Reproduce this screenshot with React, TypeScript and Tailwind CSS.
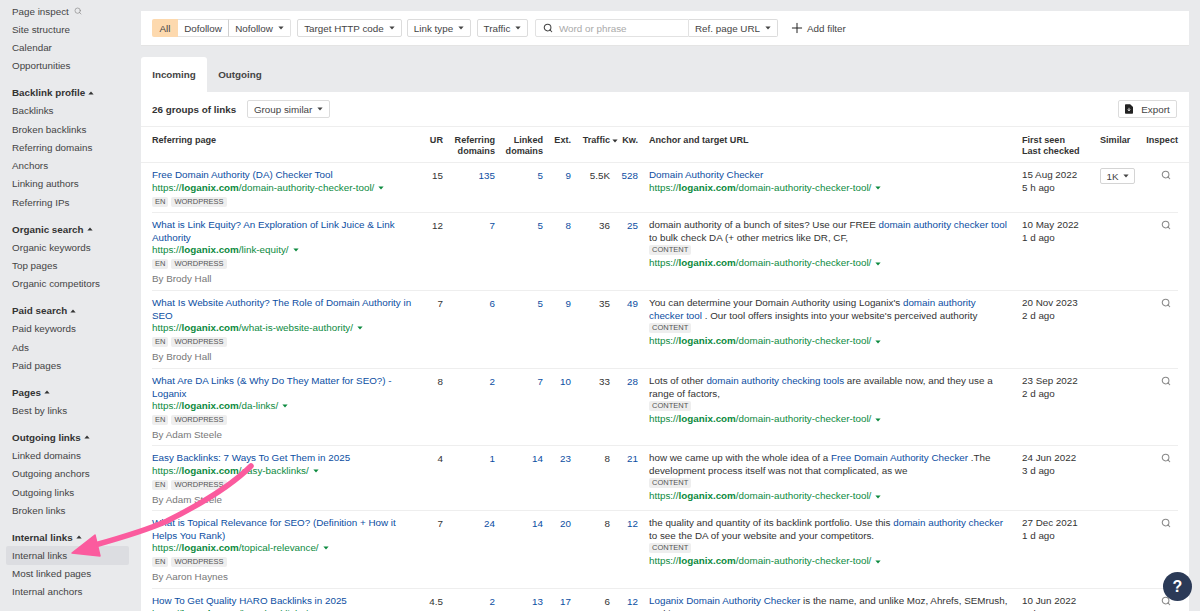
import React from "react";
import { Search, Plus } from "lucide-react";

const Caret = ({ up = false, className = "" }: { up?: boolean; className?: string }) => (
  <svg viewBox="0 0 8 5" className={"inline-block w-[6px] h-[4px] fill-current " + className}>
    <path d={up ? "M4 0.5 L7.5 4.5 L0.5 4.5 Z" : "M0.5 0.5 L7.5 0.5 L4 4.5 Z"} />
  </svg>
);

const groups: { title?: string; items: string[] }[] = [
  { items: ["Page inspect", "Site structure", "Calendar", "Opportunities"] },
  { title: "Backlink profile", items: ["Backlinks", "Broken backlinks", "Referring domains", "Anchors", "Linking authors", "Referring IPs"] },
  { title: "Organic search", items: ["Organic keywords", "Top pages", "Organic competitors"] },
  { title: "Paid search", items: ["Paid keywords", "Ads", "Paid pages"] },
  { title: "Pages", items: ["Best by links"] },
  { title: "Outgoing links", items: ["Linked domains", "Outgoing anchors", "Outgoing links", "Broken links"] },
  { title: "Internal links", items: ["Internal links", "Most linked pages", "Internal anchors"] },
];

type A = { t: string; l?: boolean };
type Row = {
  h: string;
  title: string;
  slug: string;
  by?: string;
  ur: string; rd: string; ld: string; ext: string; tr: string; kw: string;
  anchor: A[];
  content: boolean;
  first: string; last: string;
  similar?: boolean;
};

const rows: Row[] = [
  { h: "h-[49px]", title: "Free Domain Authority (DA) Checker Tool", slug: "domain-authority-checker-tool/", ur: "15", rd: "135", ld: "5", ext: "9", tr: "5.5K", kw: "528", anchor: [{ t: "Domain Authority Checker", l: true }], content: false, first: "15 Aug 2022", last: "5 h ago", similar: true },
  { h: "h-[78px]", title: "What is Link Equity? An Exploration of Link Juice & Link Authority", slug: "link-equity/", by: "By Brody Hall", ur: "12", rd: "7", ld: "5", ext: "8", tr: "36", kw: "25", anchor: [{ t: "domain authority of a bunch of sites? Use our FREE " }, { t: "domain authority checker tool", l: true }, { t: " to bulk check DA (+ other metrics like DR, CF," }], content: true, first: "10 May 2022", last: "1 d ago" },
  { h: "h-[78px]", title: "What Is Website Authority? The Role of Domain Authority in SEO", slug: "what-is-website-authority/", by: "By Brody Hall", ur: "7", rd: "6", ld: "5", ext: "9", tr: "35", kw: "49", anchor: [{ t: "You can determine your Domain Authority using Loganix's " }, { t: "domain authority checker tool", l: true }, { t: " . Our tool offers insights into your website's perceived authority" }], content: true, first: "20 Nov 2023", last: "2 d ago" },
  { h: "h-[77px]", title: "What Are DA Links (& Why Do They Matter for SEO?) - Loganix", slug: "da-links/", by: "By Adam Steele", ur: "8", rd: "2", ld: "7", ext: "10", tr: "33", kw: "28", anchor: [{ t: "Lots of other " }, { t: "domain authority checking tools", l: true }, { t: " are available now, and they use a range of factors," }], content: true, first: "23 Sep 2022", last: "2 d ago" },
  { h: "h-[65px]", title: "Easy Backlinks: 7 Ways To Get Them in 2025", slug: "easy-backlinks/", by: "By Adam Steele", ur: "4", rd: "1", ld: "14", ext: "23", tr: "8", kw: "21", anchor: [{ t: "how we came up with the whole idea of a " }, { t: "Free Domain Authority Checker", l: true }, { t: " .The development process itself was not that complicated, as we" }], content: true, first: "24 Jun 2022", last: "3 d ago" },
  { h: "h-[78px]", title: "What is Topical Relevance for SEO? (Definition + How it Helps You Rank)", slug: "topical-relevance/", by: "By Aaron Haynes", ur: "7", rd: "24", ld: "14", ext: "20", tr: "8", kw: "12", anchor: [{ t: "the quality and quantity of its backlink portfolio. Use this " }, { t: "domain authority checker", l: true }, { t: " to see the DA of your website and your competitors." }], content: true, first: "27 Dec 2021", last: "1 d ago" },
  { h: "h-[77px]", title: "How To Get Quality HARO Backlinks in 2025", slug: "haro-backlinks/", ur: "4.5", rd: "2", ld: "13", ext: "17", tr: "6", kw: "12", anchor: [{ t: "Loganix Domain Authority Checker", l: true }, { t: " is the name, and unlike Moz, Ahrefs, SEMrush, and it" }], content: false, first: "10 Jun 2022", last: "1 d ago" },
];

const Url = ({ slug }: { slug: string }) => (
  <div className="text-[#0c8a3e] leading-[12.5px] whitespace-nowrap">
    https://<b className="font-bold">loganix.com</b>/{slug}
    <Caret className="ml-[4px] align-middle" />
  </div>
);

const Tag = ({ t }: { t: string }) => (
  <span className="inline-block h-[10px] leading-[10px] px-[3px] mr-[3px] rounded-[2px] bg-[#eeeeee] text-[#555] text-[7.5px] align-top">{t}</span>
);

const Btn = ({ children, className = "" }: { children: React.ReactNode; className?: string }) => (
  <div className={"h-[18px] flex items-center justify-center gap-[5px] bg-white border border-[#dcdcdc] rounded-[2px] text-[#444] shrink-0 " + className}>{children}</div>
);

const cols = "grid grid-cols-[268px_23px_52px_48px_28px_39px_28px_384px_78px_45px_33px]";
const num = "text-right";

export default function App() {
  return (
    <div className="relative w-[1200px] h-[611px] overflow-hidden bg-[#e9eaec] text-[#333] text-[9.84px] leading-[13px] font-[Arial]">
      {/* sidebar */}
      <div className="absolute left-0 top-[2px] w-[141px] pr-[12px]">
        {groups.map((g, i) => (
          <div key={i} className={i ? "mt-[8.6px]" : ""}>
            {g.title && (
              <div className="h-[18.25px] pl-[12px] flex items-center gap-[3px] font-bold text-[#333]">
                {g.title}
                <Caret up className="w-[5px] h-[4px]" />
              </div>
            )}
            {g.items.map((it, j) => {
              const active = i === 6 && j === 0;
              return (
                <div key={it} className={"h-[18.25px] pl-[6px] ml-[6px] flex items-center gap-[5px] rounded-[2px] text-[#444] " + (active ? "bg-[#dcdde1]" : "")}>
                  {it}
                  {it === "Page inspect" && <Search size={8} className="text-[#888]" />}
                </div>
              );
            })}
          </div>
        ))}
      </div>

      {/* filter bar */}
      <div className="absolute left-[141px] top-[11px] w-[1048px] h-[35px] bg-white border-b border-[#e4e4e4] flex items-center pl-[11px]">
        <div className="flex h-[18px]">
          <div className="w-[26px] flex items-center justify-center bg-[#fdd9ae] text-[#444] rounded-l-[2px]">All</div>
          <div className="w-[51px] flex items-center justify-center border-y border-r border-[#cfcfcf] border-y-[#e2e2e2] text-[#444]">Dofollow</div>
          <div className="w-[62px] flex items-center justify-center gap-[5px] border-y border-r border-[#e2e2e2] rounded-r-[2px] text-[#444]">Nofollow <Caret /></div>
        </div>
        <Btn className="w-[105px] ml-[6px]">Target HTTP code <Caret /></Btn>
        <Btn className="w-[64px] ml-[5px]">Link type <Caret /></Btn>
        <Btn className="w-[51px] ml-[6px]">Traffic <Caret /></Btn>
        <div className="ml-[7px] w-[154px] h-[18px] flex items-center border border-[#e2e2e2] rounded-l-[2px] pl-[7px] gap-[6px] text-[#aaa]">
          <Search size={10} strokeWidth={2.5} className="text-[#444]" />
          Word or phrase
        </div>
        <Btn className="w-[89px] !border-l-0 rounded-l-none">Ref. page URL <Caret /></Btn>
        <div className="ml-[11px] flex items-center gap-[2px] text-[#444]">
          <Plus size={16} strokeWidth={1.5} className="text-[#222]" />
          Add filter
        </div>
      </div>

      {/* tabs */}
      <div className="absolute left-[141px] top-[57px] flex h-[35px]">
        <div className="w-[66px] bg-white rounded-t-[3px] flex items-center justify-center font-bold text-[#444]">Incoming</div>
        <div className="w-[66px] flex items-center justify-center font-bold text-[#444]">Outgoing</div>
      </div>

      {/* table panel */}
      <div className="absolute left-[141px] top-[92px] w-[1048px] h-[519px] bg-white overflow-hidden">
        <div className="h-[35px] flex items-center pl-[11px] pr-[12px] border-b border-[#eeeeee]">
          <b className="font-bold text-[#333]">26 groups of links</b>
          <Btn className="ml-[11px] w-[83px]">Group similar <Caret /></Btn>
          <Btn className="ml-auto w-[59px]">
            <svg viewBox="0 0 10 12" className="w-[8px] h-[10px] mr-[3px]">
              <path d="M0 1 Q0 0 1 0 H6.5 L10 3.5 V11 Q10 12 9 12 H1 Q0 12 0 11 Z" fill="#222" />
              <path d="M5 4.5 V7.5 M3.5 6.5 L5 8.5 L6.5 6.5" stroke="#fff" strokeWidth="1" fill="none" />
            </svg>
            Export
          </Btn>
        </div>
        <div className={cols + " h-[35px] mx-[11px] pt-[8px] font-bold text-[#333] text-[9.1px] leading-[11px]"}>
          <div>Referring page</div>
          <div className={num}>UR</div>
          <div className={num}>Referring<br />domains</div>
          <div className={num}>Linked<br />domains</div>
          <div className={num}>Ext.</div>
          <div className={num + " relative whitespace-nowrap"}>Traffic<Caret className="absolute right-[-8px] top-[4px]" /></div>
          <div className={num}>Kw.</div>
          <div className="pl-[11px]">Anchor and target URL</div>
          <div>First seen<br />Last checked</div>
          <div>Similar</div>
          <div className="text-right">Inspect</div>
        </div>
        <div className="border-t border-[#eeeeee]" />
        {rows.map((r, i) => (
          <div key={i} className={cols + " mx-[11px] pt-[6px] " + r.h + (i ? " border-t border-[#eeeeee]" : "")}>
            <div className="pr-[6px]">
              <div className="text-[#0b4ea2] leading-[12.5px]">{r.title}</div>
              <Url slug={r.slug} />
              <div className="mt-[2.75px] h-[11px]"><Tag t="EN" /><Tag t="WORDPRESS" /></div>
              {r.by && <div className="mt-[2px] text-[#777]">{r.by}</div>}
            </div>
            <div className={num}>{r.ur}</div>
            <div className={num + " text-[#0b4ea2]"}>{r.rd}</div>
            <div className={num + " text-[#0b4ea2]"}>{r.ld}</div>
            <div className={num + " text-[#0b4ea2]"}>{r.ext}</div>
            <div className={num}>{r.tr}</div>
            <div className={num + " text-[#0b4ea2]"}>{r.kw}</div>
            <div className="pl-[11px] pr-[12px]">
              <div className="leading-[12.5px]">
                {r.anchor.map((a, k) => (
                  <span key={k} className={a.l ? "text-[#0b4ea2]" : ""}>{a.t}</span>
                ))}
              </div>
              {r.content && <div className="mt-[1.25px] h-[12px]"><Tag t="CONTENT" /></div>}
              <div className={r.content ? "" : "mt-[0.5px]"}><Url slug="domain-authority-checker-tool/" /></div>
            </div>
            <div className="leading-[12.75px]">{r.first}<br />{r.last}</div>
            <div>
              {r.similar && (
                <div className="w-[35px] h-[16px] -mt-[1px] flex items-center justify-center gap-[4px] border border-[#d4d4d4] rounded-[2px] text-[#444]">1K <Caret /></div>
              )}
            </div>
            <div className="flex justify-end pr-[7px] pt-[1px]">
              <Search size={10} strokeWidth={2.5} className="text-[#888]" />
            </div>
          </div>
        ))}
      </div>

      {/* annotation arrow */}
      <svg className="absolute left-0 top-0 pointer-events-none" width="1200" height="611" viewBox="0 0 1200 611">
        <path d="M251 466 C 232 485, 205 502, 167 521 C 145 531, 120 538, 95 545" fill="none" stroke="#fb5b9e" strokeWidth="5.5" strokeLinecap="round" />
        <path d="M72 553 L95 535 L100 556 Z" fill="#fb5b9e" stroke="#fb5b9e" strokeWidth="1.5" strokeLinejoin="round" />
      </svg>

      {/* help */}
      <div className="absolute left-[1163px] top-[572px] w-[29px] h-[29px] rounded-full bg-[#2b3a57] flex items-center justify-center text-white font-bold text-[16px]">?</div>
    </div>
  );
}
